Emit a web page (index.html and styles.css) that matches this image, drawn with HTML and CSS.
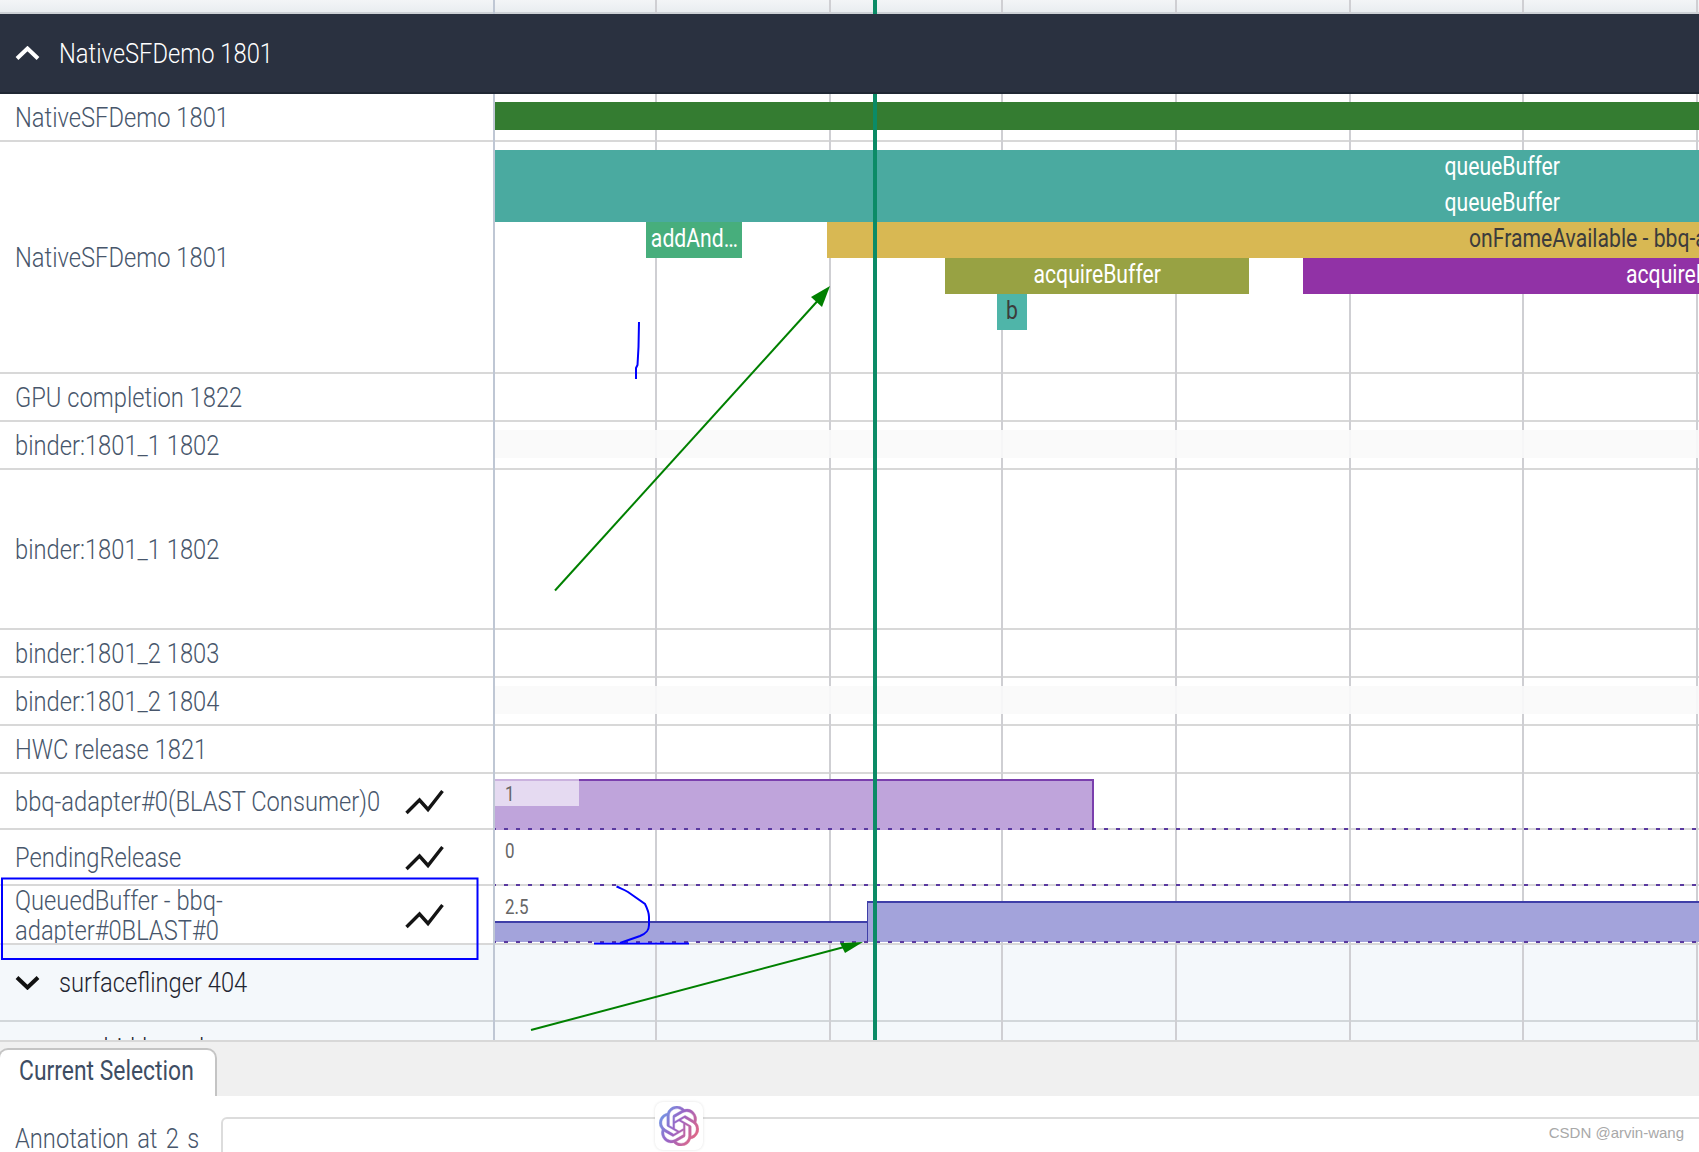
FILE: index.html
```html
<!DOCTYPE html>
<html lang="en">
<head>
<meta charset="utf-8">
<title>Perfetto trace</title>
<link rel="stylesheet" href="styles.css">
</head>
<body>
<div class="app">
  <main class="timeline">
    <div class="top-strip"><div class="track"></div></div>
    <header class="group-header">
      <svg class="chevron" viewBox="0 0 24 14"><path d="M1.500 12.500 12 2.500 22.500 12.500"/></svg>
      <span class="sq title">NativeSFDemo 1801</span>
    </header>

    <div class="row h48">
      <div class="label"><span class="sq">NativeSFDemo 1801</span></div>
      <div class="track"><div class="slice s-state"></div></div>
    </div>

    <div class="row h232">
      <div class="label"><span class="sq">NativeSFDemo 1801</span></div>
      <div class="track">
        <div class="slice s-queue1"><span class="sq-c">queueBuffer</span></div>
        <div class="slice s-queue2"><span class="sq-c">queueBuffer</span></div>
        <div class="slice s-add"><span class="sq-c">addAnd…</span></div>
        <div class="slice s-frame"><span class="sq">onFrameAvailable - bbq-adapter#0(BLAST Consumer)#0</span></div>
        <div class="slice s-acquire"><span class="sq-c">acquireBuffer</span></div>
        <div class="slice s-acquire2"><span class="sq">acquireBuffer</span></div>
        <div class="slice s-b"><span class="sq-c">b</span></div>
      </div>
    </div>

    <div class="row h48">
      <div class="label"><span class="sq">GPU completion 1822</span></div>
      <div class="track"></div>
    </div>
    <div class="row h48">
      <div class="label"><span class="sq">binder:1801_1 1802</span></div>
      <div class="track"><div class="idle"></div></div>
    </div>
    <div class="row h160">
      <div class="label"><span class="sq">binder:1801_1 1802</span></div>
      <div class="track"></div>
    </div>
    <div class="row h48">
      <div class="label"><span class="sq">binder:1801_2 1803</span></div>
      <div class="track"></div>
    </div>
    <div class="row h48">
      <div class="label"><span class="sq">binder:1801_2 1804</span></div>
      <div class="track"><div class="idle"></div></div>
    </div>
    <div class="row h48">
      <div class="label"><span class="sq">HWC release 1821</span></div>
      <div class="track"></div>
    </div>

    <div class="row h56">
      <div class="label counter-label">
        <span class="sq">bbq-adapter#0(BLAST Consumer)0</span>
        <svg class="chart" viewBox="0 0 40 26"><path d="M2.500 24 15.500 11 24 20.500 38.500 2"/></svg>
      </div>
      <div class="track">
        <div class="c1-fill"></div>
        <div class="c-tag"><span class="sq">1</span></div>
        <div class="dash"></div>
      </div>
    </div>

    <div class="row h56">
      <div class="label counter-label">
        <span class="sq">PendingRelease</span>
        <svg class="chart" viewBox="0 0 40 26"><path d="M2.500 24 15.500 11 24 20.500 38.500 2"/></svg>
      </div>
      <div class="track">
        <div class="c-value"><span class="sq">0</span></div>
        <div class="dash"></div>
      </div>
    </div>

    <div class="row h59">
      <div class="label counter-label">
        <span class="sq wrap">QueuedBuffer - bbq-adapter#0BLAST#0</span>
        <svg class="chart" viewBox="0 0 40 26"><path d="M2.500 24 15.500 11 24 20.500 38.500 2"/></svg>
      </div>
      <div class="track">
        <div class="c-value"><span class="sq">2.5</span></div>
        <div class="c3-low"></div>
        <div class="c3-high"></div>
        <div class="dash dash-end"></div>
      </div>
    </div>

    <div class="row h77 tinted">
      <div class="label group-label">
        <svg class="chevron-down" viewBox="0 0 24 14"><path d="M1.500 1.500 12 11.500 22.500 1.500"/></svg>
        <span class="sq">surfaceflinger 404</span>
      </div>
      <div class="track"></div>
    </div>
    <div class="row h48 tinted">
      <div class="label dark"><span class="sq">process bid-lane d</span></div>
      <div class="track"></div>
    </div>

    <div class="cursor"></div>
  </main>

  <section class="details">
    <nav class="tabs"><div class="tab"><span class="sq">Current Selection</span></div></nav>
    <div class="details-body">
      <span class="sq annotation">Annotation at 2 s</span>
      <div class="note-input"></div>
    </div>
  </section>

  <svg class="scribbles" viewBox="0 0 1699 1152">
    <rect class="ink-blue box" x="2" y="878.500" width="475.500" height="80.500"/>
    <path class="ink-blue" d="M639 322 638.500 347 637.500 365 636 368V379"/>
    <path class="ink-blue" d="M616.500 886.500C622 889 624 889.500 628 892L645 904C648 910 649 913 649 917V925C649 930 647 933 640 936L620 943"/>
    <path class="ink-blue" d="M594 943.500H689"/>
    <path class="ink-green" d="M555 590.500 822 296"/>
    <path class="head" d="M830 286 822 307 811 297Z"/>
    <path class="ink-green" d="M531 1030 848 946"/>
    <path class="head" d="M863 942 845 953 840 943Z"/>
  </svg>

  <div class="logo-tile">
    <svg class="logo" viewBox="0 0 24 24">
      <defs>
        <linearGradient id="knot" x1="0" y1="0.200" x2="1" y2="0.800">
          <stop offset="0" stop-color="#6f9be8"/>
          <stop offset="0.450" stop-color="#9a63c4"/>
          <stop offset="1" stop-color="#e8687f"/>
        </linearGradient>
      </defs>
      <path fill="url(#knot)" stroke="url(#knot)" stroke-width="0.200" d="M22.2819 9.8211a5.9847 5.9847 0 0 0-.5157-4.9108 6.0462 6.0462 0 0 0-6.5098-2.9A6.0651 6.0651 0 0 0 4.9807 4.1818a5.9847 5.9847 0 0 0-3.9977 2.9 6.0462 6.0462 0 0 0 .7427 7.0966 5.98 5.98 0 0 0 .511 4.9107 6.051 6.051 0 0 0 6.5146 2.9001A5.9847 5.9847 0 0 0 13.2599 24a6.0557 6.0557 0 0 0 5.7718-4.2058 5.9894 5.9894 0 0 0 3.9977-2.9001 6.0557 6.0557 0 0 0-.7475-7.0729zm-9.022 12.6081a4.4755 4.4755 0 0 1-2.8764-1.0408l.1419-.0804 4.7783-2.7582a.7948.7948 0 0 0 .3927-.6813v-6.7369l2.02 1.1686a.071.071 0 0 1 .038.052v5.5826a4.504 4.504 0 0 1-4.4945 4.4944zm-9.6607-4.1254a4.4708 4.4708 0 0 1-.5346-3.0137l.142.0852 4.783 2.7582a.7712.7712 0 0 0 .7806 0l5.8428-3.3685v2.3324a.0804.0804 0 0 1-.0332.0615L9.74 19.9502a4.4992 4.4992 0 0 1-6.1408-1.6464zM2.3408 7.8956a4.485 4.485 0 0 1 2.3655-1.9728V11.6a.7664.7664 0 0 0 .3879.6765l5.8144 3.3543-2.0201 1.1685a.0757.0757 0 0 1-.071 0l-4.8303-2.7865A4.504 4.504 0 0 1 2.3408 7.872zm16.5963 3.8558L13.1038 8.364 15.1192 7.2a.0757.0757 0 0 1 .071 0l4.8303 2.7913a4.4944 4.4944 0 0 1-.6765 8.1042v-5.6772a.79.79 0 0 0-.407-.667zm2.0107-3.0231l-.142-.0852-4.7735-2.7818a.7759.7759 0 0 0-.7854 0L9.409 9.2297V6.8974a.0662.0662 0 0 1 .0284-.0615l4.8303-2.7866a4.4992 4.4992 0 0 1 6.6802 4.66zM8.3065 12.863l-2.02-1.1638a.0804.0804 0 0 1-.038-.0567V6.0742a4.4992 4.4992 0 0 1 7.3757-3.4537l-.142.0805L8.704 5.459a.7948.7948 0 0 0-.3927.6813zm1.0976-2.3654l2.602-1.4998 2.6069 1.4998v2.9994l-2.5974 1.4997-2.6067-1.4997Z"/>
    </svg>
  </div>
  <div class="watermark">CSDN @arvin-wang</div>
</div>
</body>
</html>
```
FILE: styles.css
```css
:root {
  --grid:
    linear-gradient(90deg,
      #bfc7d4 0 2px,
      transparent 2px 162px, #cfcfd3 162px 164px,
      transparent 164px 336px, #cfcfd3 336px 338px,
      transparent 338px 508px, #cfcfd3 508px 510px,
      transparent 510px 682px, #cfcfd3 682px 684px,
      transparent 684px 856px, #cfcfd3 856px 858px,
      transparent 858px 1029px, #cfcfd3 1029px 1031px,
      transparent 1031px 1203px, #cfcfd3 1203px 1205px,
      transparent 1205px);
}

* { box-sizing: border-box; }

html, body {
  margin: 0;
  height: 100%;
  overflow: hidden;
  background: #fff;
}

body {
  font-family: Roboto, "Liberation Sans", sans-serif;
  font-weight: 300;
  font-size: 28px;
  color: #47566b;
}

.app {
  position: relative;
  width: 1699px;
  height: 1152px;
  display: flex;
  flex-direction: column;
  overflow: hidden;
}

/* squeezed label text */
.sq, .sq-c {
  display: inline-block;
  white-space: nowrap;
  transform: scaleX(.847);
  transform-origin: left center;
}
.sq-c { transform-origin: center center; }

.timeline {
  position: relative;
  height: 1040px;
  flex: none;
  overflow: hidden;
}

.top-strip {
  height: 14px;
  background: linear-gradient(#f3f5f7, #e9edf0);
  border-bottom: 2px solid #cdd1d6;
  padding-left: 493px;
}
.top-strip .track { height: 14px; }

.group-header {
  position: relative;
  z-index: 2;
  height: 80px;
  display: flex;
  align-items: center;
  gap: 19px;
  padding-left: 15px;
  background: #2a3140;
  border-bottom: 2px solid #1f2733;
  color: #fff;
}
.chevron { width: 25px; height: 14px; flex: none; }
.chevron path { fill: none; stroke: #fff; stroke-width: 4; }

.row {
  display: flex;
  border-bottom: 2px solid #d8d8d8;
  background: #fff;
}
.h48 { height: 48px; }
.h56 { height: 56px; }
.h59 { height: 59px; }
.h77 { height: 77px; }
.h160 { height: 160px; }
.h232 { height: 232px; }

.tinted { background: #f4f8fb; border-bottom-color: #d2d7da; }

.label {
  width: 493px;
  flex: none;
  display: flex;
  align-items: center;
  padding-left: 15px;
  overflow: hidden;
}
.counter-label { padding-right: 49px; }
.counter-label .sq { flex: none; width: 360px; }
.counter-label .wrap {
  white-space: normal;
  line-height: 30px;
  width: 330px;
  margin-top: 2px;
}
.chart { width: 40px; height: 26px; flex: none; margin: 2px 0 0 auto; }
.chart path { fill: none; stroke: #141414; stroke-width: 3.4; }

.group-label { gap: 19px; color: #1f2530; }
.chevron-down { width: 25px; height: 14px; flex: none; }
.chevron-down path { fill: none; stroke: #111; stroke-width: 4; }
.dark { color: #1f2530; padding-top: 6px; }

.track {
  position: relative;
  flex: 1;
  min-width: 0;
  margin-bottom: -2px;
  background-image: var(--grid);
  overflow: hidden;
}

.slice {
  position: absolute;
  height: 36px;
  display: flex;
  align-items: center;
  justify-content: center;
  padding-bottom: 3px;
  font-size: 25px;
  font-weight: 400;
  color: #fff;
  overflow: hidden;
}
.s-state { top: 8px; left: 2px; width: 1204px; height: 28px; background: #347c31; }
.s-queue1 { top: 8px; left: 2px; width: 2015px; background: #4aaaa0; }
.s-queue2 { top: 44px; left: 2px; width: 2015px; background: #4aaaa0; }
.s-add { top: 80px; left: 153px; width: 96px; background: #47ae7c; }
.s-frame {
  top: 80px;
  left: 334px;
  width: 1000px;
  justify-content: flex-start;
  padding-left: 642px;
  background: #d8b853;
  color: #3c3c3c;
}
.s-acquire { top: 116px; left: 452px; width: 304px; background: #98a243; }
.s-acquire2 {
  top: 116px;
  left: 810px;
  width: 600px;
  justify-content: flex-start;
  padding-left: 323px;
  background: #9132a6;
}
.s-b { top: 152px; left: 504px; width: 30px; background: #4fb5a9; color: #3c3c3c; }

.idle {
  position: absolute;
  top: 8px;
  left: 2px;
  right: 0;
  height: 28px;
  background: rgba(250, 250, 250, .92);
}

.c1-fill {
  position: absolute;
  top: 5px;
  left: 2px;
  width: 599px;
  bottom: 0;
  background: #bfa4db;
  border-top: 2px solid #7a3fad;
  border-right: 2px solid #7a3fad;
}
.c-tag, .c-value {
  position: absolute;
  left: 2px;
  top: 5px;
  height: 27px;
  padding-left: 10px;
  display: flex;
  align-items: center;
  font-size: 20px;
  font-weight: 400;
  color: #666;
}
.c-tag { width: 84px; padding-top: 2px; background: rgba(255, 255, 255, .6); }
.c-value { top: 7px; }

.c3-low {
  position: absolute;
  left: 2px;
  width: 372px;
  top: 35px;
  bottom: 3px;
  background: #a3a3db;
  border-top: 2px solid #3f3fa8;
}
.c3-high {
  position: absolute;
  left: 374px;
  right: 0;
  top: 15px;
  bottom: 3px;
  background: linear-gradient(90deg, #3f3fa8 0 1px, #a3a3db 1px 100%);
  border-top: 2px solid #3f3fa8;
}
.dash {
  position: absolute;
  left: 2px;
  right: 0;
  bottom: 0;
  height: 2px;
  background: linear-gradient(90deg, #5a3aa0 0 4px, transparent 4px) 9px 0 / 12px 2px repeat-x;
}
.dash-end { bottom: 2px; }

.cursor {
  position: absolute;
  z-index: 1;
  top: 0;
  bottom: 0;
  left: 873px;
  width: 4px;
  background: #0b8b66;
}

.details {
  flex: 1;
  display: flex;
  flex-direction: column;
  border-top: 2px solid #d8d8d8;
}
.tabs {
  height: 54px;
  flex: none;
  padding-top: 6px;
  background: #f0f0f0;
}
.tab {
  width: 219px;
  height: 48px;
  margin-left: -2px;
  padding: 0 0 4px 19px;
  display: flex;
  align-items: center;
  background: #fff;
  border: 2px solid #c4c4c4;
  border-bottom: 0;
  border-radius: 10px 10px 0 0;
  font-size: 27px;
  font-weight: 400;
  color: #3e4d63;
}
.details-body {
  flex: 1;
  display: flex;
  padding: 21px 0 0 15px;
  align-items: flex-start;
}
.annotation { flex: none; width: 206px; margin-top: 5px; word-spacing: 3px; }
.note-input {
  flex: 1;
  height: 60px;
  margin-right: -20px;
  border: 2px solid #dcdcdc;
  border-radius: 6px;
  background: #fff;
}

.scribbles {
  position: absolute;
  z-index: 3;
  inset: 0;
  width: 1699px;
  height: 1152px;
  pointer-events: none;
}
.ink-blue { fill: none; stroke: #0000ff; stroke-width: 2; }
.ink-green { fill: none; stroke: #008000; stroke-width: 2; }
.head { fill: #008000; }

.logo-tile {
  position: absolute;
  z-index: 4;
  left: 655px;
  top: 1102px;
  width: 48px;
  height: 48px;
  display: flex;
  align-items: center;
  justify-content: center;
  background: #fff;
  border-radius: 8px;
  box-shadow: 0 0 3px rgba(0, 0, 0, .12);
}
.logo { width: 40px; height: 40px; }

.watermark {
  position: absolute;
  z-index: 4;
  right: 15px;
  top: 1124px;
  font-family: "Liberation Sans", Arial, sans-serif;
  font-size: 15px;
  font-weight: 400;
  color: #a8a8a8;
}
```
